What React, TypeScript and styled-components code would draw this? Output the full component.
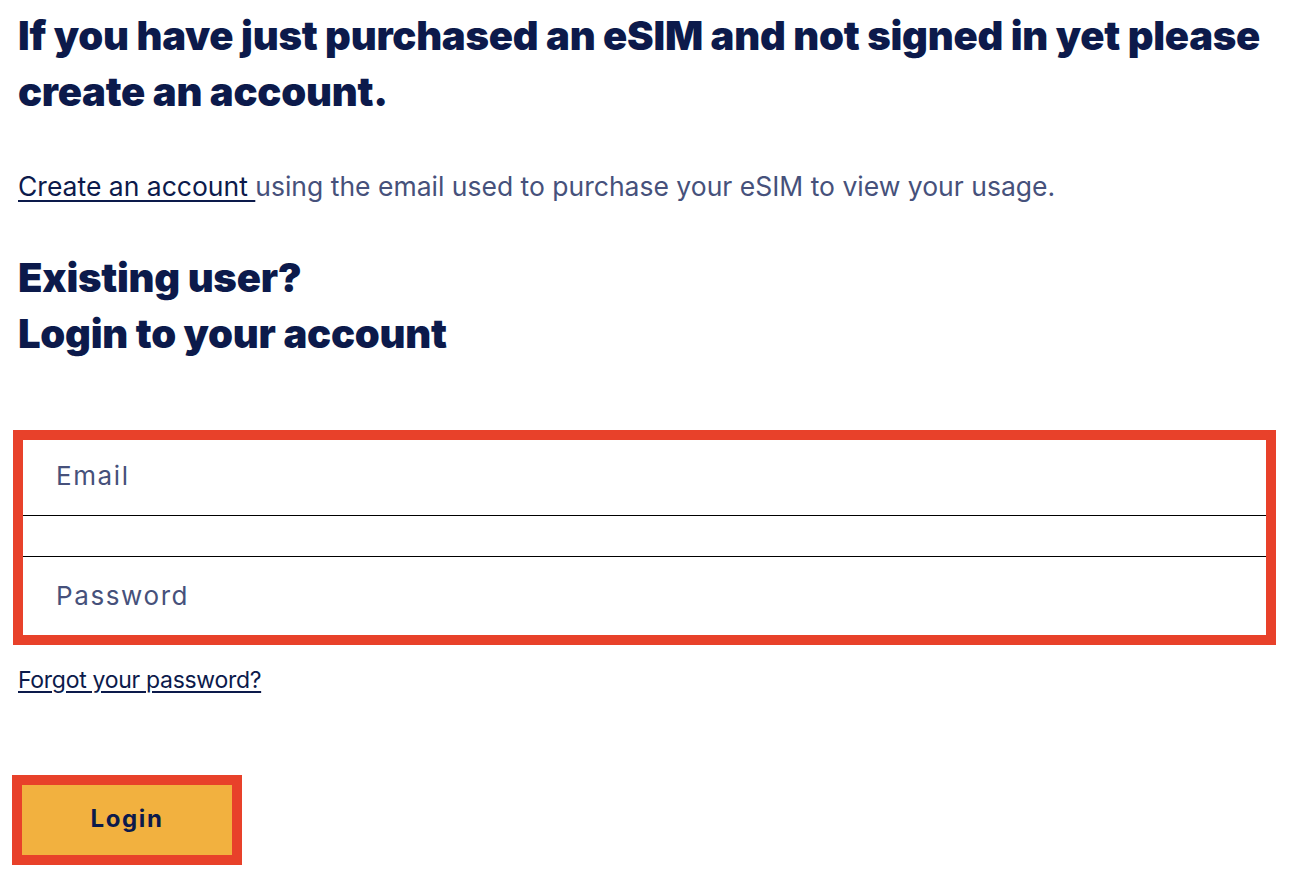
import React from 'react'
import styled, { createGlobalStyle } from 'styled-components'

const GlobalStyle = createGlobalStyle`
  html, body {
    margin: 0;
    padding: 0;
    background: #ffffff;
  }
  body {
    font-family: Inter, 'Noto Sans', 'Liberation Sans', sans-serif;
    color: #0c1a4b;
  }
`

const App = () => {
  return (
    <>
      <GlobalStyle />
      <PageStyled>
        <TitleStyled>
          If you have just purchased an eSIM and not signed in yet please
          create an account.
        </TitleStyled>
        <IntroStyled>
          <a href="#">Create an account </a>
          using the email used to purchase your eSIM to view your usage.
        </IntroStyled>
        <SubtitleStyled>
          Existing user?
          <br />
          Login to your account
        </SubtitleStyled>
        <FormStyled onSubmit={(e) => e.preventDefault()}>
          <FieldsStyled>
            <InputStyled type="email" placeholder="Email" height={76} shift={5} />
            <ErrorRow />
            <InputStyled type="password" placeholder="Password" height={78} shift={2} last />
          </FieldsStyled>
          <ForgotStyled href="#">Forgot your password?</ForgotStyled>
          <ButtonStyled type="submit">Login</ButtonStyled>
        </FormStyled>
      </PageStyled>
    </>
  )
}

export default App

const PageStyled = styled.div`
  padding: 8px 18px 0;
  width: 1294px;
  box-sizing: border-box;
`

const TitleStyled = styled.h1`
  margin: 0;
  font-weight: 900;
  font-size: 40px;
  line-height: 56px;
  letter-spacing: -0.25px;
  color: #0c1a4b;
  max-width: 1258px;
`

const IntroStyled = styled.p`
  margin: 48px 0 0;
  font-weight: 400;
  font-size: 26.5px;
  line-height: 36px;
  color: #46517b;

  a {
    color: #0c1a4b;
    text-decoration: underline;
    text-decoration-thickness: 2px;
    text-underline-offset: 4px;
  }
`

const SubtitleStyled = styled.h2`
  margin: 46px 0 0;
  font-weight: 900;
  font-size: 40px;
  line-height: 56px;
  letter-spacing: -0.25px;
  color: #0c1a4b;
`

const FormStyled = styled.form`
  display: flex;
  flex-direction: column;
  align-items: flex-start;
  margin-top: 68px;
`

const FieldsStyled = styled.div`
  display: flex;
  flex-direction: column;
  width: 1263px;
  margin-left: -5px;
  border: 10px solid #e8412a;
  box-sizing: border-box;
  background: #ffffff;
`

const InputStyled = styled.input<{ height: number; shift: number; last?: boolean }>`
  height: ${({ height }) => height}px;
  box-sizing: border-box;
  border: none;
  border-bottom: ${({ last }) => (last ? 'none' : '1px solid #000')};
  padding: 0 33px ${({ shift }) => shift}px;
  font-family: Inter, 'Noto Sans', sans-serif;
  font-size: 26px;
  letter-spacing: 1.6px;
  color: #0c1a4b;
  outline: none;
  background: transparent;

  &::placeholder {
    color: #46517b;
  }
`

const ErrorRow = styled.div`
  height: 41px;
  box-sizing: border-box;
  border-bottom: 1px solid #000;
`

const ForgotStyled = styled.a`
  margin-top: 21px;
  font-size: 23px;
  line-height: 28px;
  letter-spacing: -0.3px;
  color: #0c1a4b;
  text-decoration: underline;
  text-decoration-thickness: 2px;
  text-underline-offset: 3px;
`

const ButtonStyled = styled.button`
  margin-top: 81px;
  margin-left: -6px;
  width: 230px;
  height: 90px;
  padding: 0 0 4px;
  border: 10px solid #e8412a;
  background: #f2b13f;
  font-family: Inter, 'Noto Sans', sans-serif;
  font-weight: 700;
  font-size: 24px;
  letter-spacing: 1.6px;
  color: #0c1a4b;
  cursor: pointer;
`
